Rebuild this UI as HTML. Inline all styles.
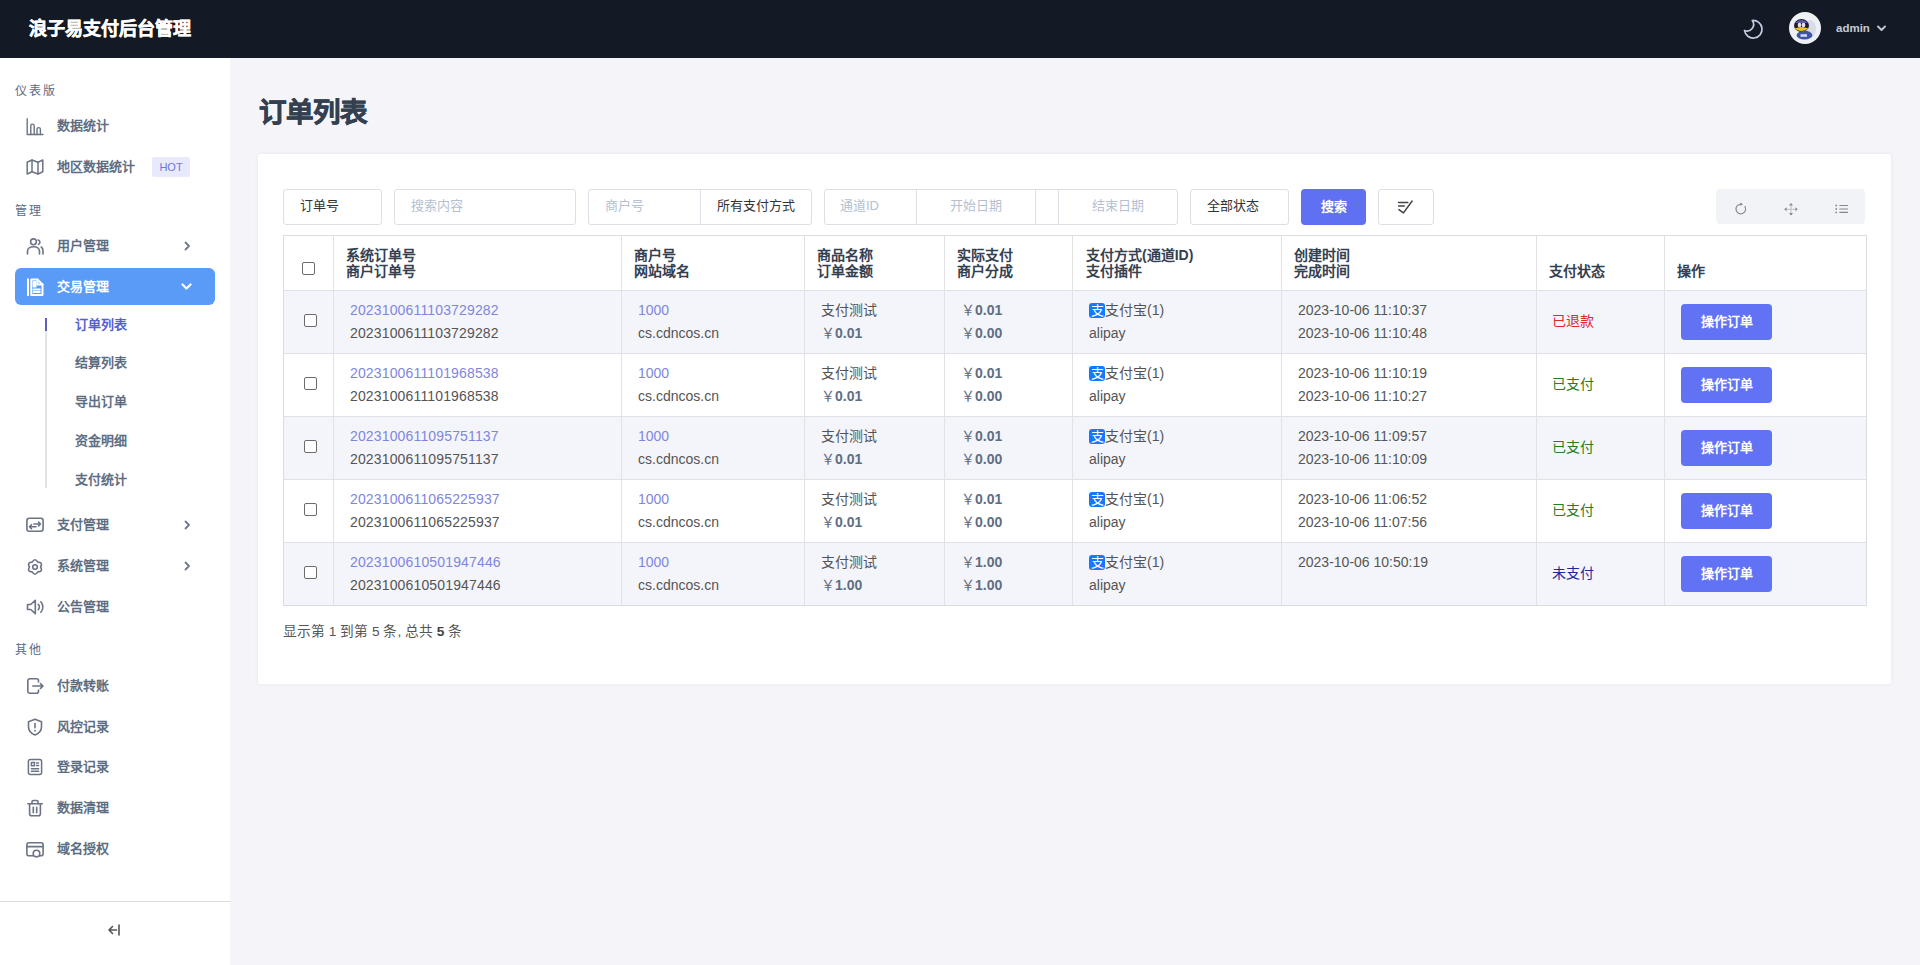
<!DOCTYPE html>
<html lang="zh-CN">
<head>
<meta charset="utf-8">
<style>
*{box-sizing:border-box;margin:0;padding:0}
html,body{width:1920px;height:965px;overflow:hidden}
body{position:relative;background:#f4f4f9;font-family:"Liberation Sans",sans-serif;color:#4d4d4d}
.abs{position:absolute}
.t{position:absolute;white-space:nowrap}
#hdr{left:0;top:0;width:1920px;height:58px;background:#141a25}
#side{left:0;top:58px;width:230px;height:907px;background:#fff}
.sec{font-size:12px;font-weight:400;color:#5a6b84;letter-spacing:2px;line-height:14px}
.mi{left:57px;font-size:13px;font-weight:700;color:#5e6e82;line-height:16px}
.sub{left:75px;font-size:13px;font-weight:700;color:#5e6e82;line-height:16px}
#card{left:258px;top:154px;width:1633px;height:530px;background:#fff;border-radius:3px;box-shadow:0 0 4px rgba(60,70,110,.07)}
.inp{position:absolute;top:189px;height:36px;border:1px solid #dcdfe5;border-radius:3px;background:#fff}
.vl{position:absolute;width:1px;background:#dcdfe5}
.ph{font-size:13px;line-height:17px;color:#b4bfd3;top:197px}
.tx{font-size:13px;line-height:17px;color:#333;top:197px}
.th{font-size:14px;font-weight:700;color:#344050;line-height:15.5px}
.cb{position:absolute;width:13px;height:13px;border:1px solid #6b6b6b;border-radius:2px;background:#fff}
.lk{font-size:14px;line-height:17px;color:#7f86dd;letter-spacing:0.15px}
.d1{font-size:14px;line-height:17px;color:#545454;letter-spacing:0.15px}
.d2{font-size:14px;line-height:17px;color:#545454}
.dt{font-size:14px;line-height:17px;color:#555}
.amt{font-size:14px;line-height:17px;color:#5e6e82;font-weight:700}
.st{font-size:14px;line-height:17px}
.btn{position:absolute;width:91px;height:36px;background:#6272f5;border-radius:4px;color:#fff;font-size:13px;font-weight:700;line-height:36px;text-align:center}
</style>
</head>
<body>
<div id="hdr" class="abs"></div>
<div class="t" style="left:29px;top:16px;font-size:18px;font-weight:700;color:#fff;-webkit-text-stroke:0.5px #fff;line-height:26px">浪子易支付后台管理</div>
<svg class="abs" style="left:1742px;top:18px" width="22" height="22" viewBox="0 0 22 22" fill="none" stroke="#c5cbe0" stroke-width="1.7" stroke-linecap="round" stroke-linejoin="round"><path d="M10.3 2.5A8.8 8.8 0 1 1 2.5 12.5 6.6 6.6 0 0 0 10.3 2.5z"/></svg>
<svg class="abs" style="left:1789px;top:12px" width="32" height="32" viewBox="0 0 32 32"><circle cx="16" cy="16" r="16" fill="#eef0f6"/><ellipse cx="21" cy="17" rx="6" ry="9" fill="#d9dce8"/><ellipse cx="12.5" cy="13.5" rx="7.5" ry="6.5" fill="#1f1d33"/><path d="M6 11 Q12.5 5 19 11z" fill="#5d5aa8"/><ellipse cx="10.5" cy="13" rx="1.8" ry="2.2" fill="#e6dff0"/><ellipse cx="14.5" cy="13" rx="1.8" ry="2.2" fill="#e6dff0"/><path d="M5.5 16.5 Q12.5 13.5 19.5 16.5 Q12.5 21.5 5.5 16.5z" fill="#e8c21a"/><ellipse cx="15.5" cy="23.2" rx="7.8" ry="4.4" fill="#3d55a5"/><path d="M11.5 23.5h6.5" stroke="#cfd9f0" stroke-width="2.6"/></svg>
<div class="t" style="left:1836px;top:21px;font-size:11.5px;font-weight:700;color:#c4cad6;line-height:14px">admin</div>
<svg class="abs" style="left:1877px;top:25px" width="9" height="7" viewBox="0 0 9 7" fill="none" stroke="#c4cad6" stroke-width="1.8" stroke-linecap="round" stroke-linejoin="round"><path d="M1 1.5l3.5 3.5 3.5-3.5"/></svg>
<div id="side" class="abs"></div>
<div class="t sec" style="left:15px;top:84px">仪表版</div>
<svg class="abs" style="left:26px;top:118px" width="18" height="18" viewBox="0 0 18 18" fill="none" stroke="#6b7384" stroke-width="1.4" stroke-linecap="round" stroke-linejoin="round"><path d="M1.2 0.8V16.5H17"/><path d="M4.8 16.5V7.8a1.7 1.7 0 0 1 3.4 0v8.7"/><path d="M11 16.5v-5.2a1.7 1.7 0 0 1 3.4 0v5.2"/></svg>
<div class="t mi" style="top:118px">数据统计</div>
<svg class="abs" style="left:26px;top:158px" width="18" height="18" viewBox="0 0 18 18" fill="none" stroke="#6b7384" stroke-width="1.5" stroke-linecap="round" stroke-linejoin="round"><path d="M1.2 4.2L6 2l6 2.2L16.8 2v11.8L12 16l-6-2.2L1.2 16z"/><path d="M6 2v11.8M12 4.2V16"/></svg>
<div class="t mi" style="top:159px">地区数据统计</div>
<div class="t" style="left:152px;top:157px;width:38px;height:20px;background:#e8e9fc;border-radius:2px;color:#6d78d8;font-size:11px;line-height:20px;text-align:center">HOT</div>
<div class="t sec" style="left:15px;top:204px">管理</div>
<svg class="abs" style="left:26px;top:238px" width="18" height="18" viewBox="0 0 18 18" fill="none" stroke="#6b7384" stroke-width="1.6" stroke-linecap="round" stroke-linejoin="round"><circle cx="7.5" cy="3.8" r="2.9"/><path d="M1.5 16v-2.8c0-2.6 2.7-4.4 6-4.4s6 1.8 6 4.4V16"/><path d="M12.2 2a2.3 2.3 0 0 1 .4 4.3"/><path d="M15.2 9c1.1.7 1.8 2.2 1.8 4V16"/></svg>
<div class="t mi" style="top:238px">用户管理</div>
<svg class="abs" style="left:184px;top:241px" width="7" height="10" viewBox="0 0 7 10" fill="none" stroke="#6c7a8e" stroke-width="1.8" stroke-linecap="round" stroke-linejoin="round"><path d="M1.5 1.5l3.5 3.5-3.5 3.5"/></svg>
<div class="abs" style="left:15px;top:268px;width:200px;height:37px;background:#5a9bf7;border-radius:6px"></div>
<svg class="abs" style="left:26px;top:278px" width="18" height="18" viewBox="0 0 18 18" fill="none" stroke="#fff" stroke-width="2" stroke-linecap="round" stroke-linejoin="round"><path d="M2 1.2v16"/><path d="M5.3 1.5h6.2l5 5v10.5H5.3z"/><path d="M11.5 1.5v5h5"/><path d="M7.6 11.4h6.2M7.6 14h6.2"/><path d="M7.6 4h2v4.5h-2z" fill="#fff"/></svg>
<div class="t mi" style="top:279px;color:#fff">交易管理</div>
<svg class="abs" style="left:181px;top:283px" width="11" height="8" viewBox="0 0 11 8" fill="none" stroke="#fff" stroke-width="2.2" stroke-linecap="round" stroke-linejoin="round"><path d="M1.5 1.5l4 4 4-4"/></svg>
<div class="abs" style="left:45px;top:318px;width:2px;height:170px;background:#e3e4e7"></div>
<div class="abs" style="left:45px;top:318px;width:2px;height:13px;background:#5c60b8"></div>
<div class="t sub" style="top:317px;color:#555fd0">订单列表</div>
<div class="t sub" style="top:355px">结算列表</div>
<div class="t sub" style="top:394px">导出订单</div>
<div class="t sub" style="top:433px">资金明细</div>
<div class="t sub" style="top:472px">支付统计</div>
<svg class="abs" style="left:26px;top:516px" width="18" height="18" viewBox="0 0 18 18" fill="none" stroke="#6b7384" stroke-width="1.6" stroke-linecap="round" stroke-linejoin="round"><rect x="0.9" y="2.3" width="16.2" height="13" rx="2.5"/><path d="M8 8h6.5M12.5 6l2 2-2 2"/><path d="M10 10.7H3.5M5.5 8.7l-2 2 2 2"/></svg>
<div class="t mi" style="top:517px">支付管理</div>
<svg class="abs" style="left:184px;top:520px" width="7" height="10" viewBox="0 0 7 10" fill="none" stroke="#6c7a8e" stroke-width="1.8" stroke-linecap="round" stroke-linejoin="round"><path d="M1.5 1.5l3.5 3.5-3.5 3.5"/></svg>
<svg class="abs" style="left:26px;top:558px" width="18" height="18" viewBox="0 0 18 18" fill="none" stroke="#6b7384" stroke-width="1.6" stroke-linecap="round" stroke-linejoin="round"><path d="M6.20 4.15 Q9.00 -0.60 11.80 4.15 Q17.31 4.20 14.60 9.00 Q17.31 13.80 11.80 13.85 Q9.00 18.60 6.20 13.85 Q0.69 13.80 3.40 9.00 Q0.69 4.20 6.20 4.15z"/><circle cx="9" cy="9" r="2.3"/></svg>
<div class="t mi" style="top:558px">系统管理</div>
<svg class="abs" style="left:184px;top:561px" width="7" height="10" viewBox="0 0 7 10" fill="none" stroke="#6c7a8e" stroke-width="1.8" stroke-linecap="round" stroke-linejoin="round"><path d="M1.5 1.5l3.5 3.5-3.5 3.5"/></svg>
<svg class="abs" style="left:26px;top:598px" width="18" height="18" viewBox="0 0 18 18" fill="none" stroke="#6b7384" stroke-width="1.6" stroke-linecap="round" stroke-linejoin="round"><path d="M1.5 6.5h3.2L9.3 2.3v13.4L4.7 11.5H1.5z"/><path d="M12.2 6.3a4 4 0 0 1 0 5.4"/><path d="M14.8 3.8a7.5 7.5 0 0 1 0 10.4"/></svg>
<div class="t mi" style="top:599px">公告管理</div>
<div class="t sec" style="left:15px;top:643px">其他</div>
<svg class="abs" style="left:26px;top:677px" width="18" height="18" viewBox="0 0 18 18" fill="none" stroke="#6b7384" stroke-width="1.6" stroke-linecap="round" stroke-linejoin="round"><path d="M12.5 5V3.8a2 2 0 0 0-2-2H3.8a2 2 0 0 0-2 2v10.4a2 2 0 0 0 2 2h6.7a2 2 0 0 0 2-2V13"/><path d="M6.8 9h10M14.5 6.6L17 9l-2.5 2.4"/></svg>
<div class="t mi" style="top:678px">付款转账</div>
<svg class="abs" style="left:26px;top:718px" width="18" height="18" viewBox="0 0 18 18" fill="none" stroke="#6b7384" stroke-width="1.6" stroke-linecap="round" stroke-linejoin="round"><path d="M9 1.2l6.5 2.5v5c0 4-2.8 6.8-6.5 8.3-3.7-1.5-6.5-4.3-6.5-8.3v-5z"/><path d="M9 5.5v4.3"/><path d="M9 12.6v.4"/></svg>
<div class="t mi" style="top:719px">风控记录</div>
<svg class="abs" style="left:26px;top:758px" width="18" height="18" viewBox="0 0 18 18" fill="none" stroke="#6b7384" stroke-width="1.5" stroke-linecap="round" stroke-linejoin="round"><rect x="2.4" y="1.5" width="13.2" height="15" rx="2"/><rect x="5.4" y="4.6" width="3" height="3.2"/><path d="M10.5 5h2M10.5 7.5h2M5.4 10.8h7.2M5.4 13.3h7.2"/></svg>
<div class="t mi" style="top:759px">登录记录</div>
<svg class="abs" style="left:26px;top:799px" width="18" height="18" viewBox="0 0 18 18" fill="none" stroke="#6b7384" stroke-width="1.6" stroke-linecap="round" stroke-linejoin="round"><path d="M1.8 4.8h14.4"/><path d="M6 4.8V2.8a1.3 1.3 0 0 1 1.3-1.3h3.4A1.3 1.3 0 0 1 12 2.8v2"/><path d="M3.6 4.8v10a2 2 0 0 0 2 2h6.8a2 2 0 0 0 2-2v-10"/><path d="M7.3 8.2v5.5M10.7 8.2v5.5"/></svg>
<div class="t mi" style="top:800px">数据清理</div>
<svg class="abs" style="left:26px;top:841px" width="18" height="18" viewBox="0 0 18 18" fill="none" stroke="#6b7384" stroke-width="1.6" stroke-linecap="round" stroke-linejoin="round"><rect x="0.9" y="1.8" width="16.2" height="13" rx="2"/><path d="M0.9 5.6h16.2"/><circle cx="10.5" cy="12.6" r="3.3" fill="#fff"/></svg>
<div class="t mi" style="top:841px">域名授权</div>
<div class="abs" style="left:0;top:901px;width:231px;height:1px;background:#d8dade"></div>
<svg class="abs" style="left:108px;top:924px" width="13" height="12" viewBox="0 0 13 12" fill="none" stroke="#555" stroke-width="1.6" stroke-linecap="round" stroke-linejoin="round"><path d="M1.5 6h7M4.5 2.5L1 6l3.5 3.5"/><path d="M11 1v10"/></svg>
<div class="t" style="left:259px;top:95px;font-size:27.5px;font-weight:700;-webkit-text-stroke:0.7px #344050;color:#344050;line-height:36px">订单列表</div>
<div id="card" class="abs"></div>
<div class="inp" style="left:283px;width:99px"></div>
<div class="t tx" style="left:300px">订单号</div>
<div class="inp" style="left:394px;width:182px"></div>
<div class="t ph" style="left:411px">搜索内容</div>
<div class="inp" style="left:588px;width:224px"></div>
<div class="vl" style="left:700px;top:190px;height:34px"></div>
<div class="t ph" style="left:605px">商户号</div>
<div class="t tx" style="left:717px">所有支付方式</div>
<div class="inp" style="left:824px;width:354px"></div>
<div class="vl" style="left:916px;top:190px;height:34px"></div>
<div class="vl" style="left:1035px;top:190px;height:34px"></div>
<div class="vl" style="left:1058px;top:190px;height:34px"></div>
<div class="t ph" style="left:840px">通道ID</div>
<div class="t ph" style="left:950px">开始日期</div>
<div class="t ph" style="left:1092px">结束日期</div>
<div class="inp" style="left:1190px;width:99px"></div>
<div class="t tx" style="left:1207px">全部状态</div>
<div class="abs" style="left:1301px;top:189px;width:65px;height:36px;background:#6070f2;border-radius:4px;color:#fff;font-size:13px;font-weight:700;line-height:36px;text-align:center">搜索</div>
<div class="inp" style="left:1378px;width:56px"></div>
<svg class="abs" style="left:1396px;top:198px" width="18" height="17" viewBox="0 0 18 17" fill="none" stroke="#444" stroke-width="1.5" stroke-linecap="round" stroke-linejoin="round"><path d="M2.6 4.4h9.2M2.6 7.9h5.7"/><path d="M2.9 11.6L7.5 14.9 16.1 3"/></svg>
<div class="abs" style="left:1716px;top:189px;width:149px;height:35px;background:#f1f3f6;border-radius:4px"></div>
<svg class="abs" style="left:1734px;top:202px" width="14" height="14" viewBox="0 0 14 14" fill="none" stroke="#888" stroke-width="1.15" stroke-linecap="round" stroke-linejoin="round"><path d="M11 4.6A4.8 4.8 0 1 1 6.8 2.2"/><path d="M6.3 0.4L9 2.2 6.3 4z" fill="#888" stroke="none"/></svg>
<svg class="abs" style="left:1783px;top:202px" width="16" height="15" viewBox="0 0 16 15" fill="none" stroke="#bbb" stroke-width="1" stroke-linecap="round" stroke-linejoin="round"><path d="M2.5 7.3h11M8 2v10.6" stroke-width="0.9"/><path d="M1.2 7.3l2.4-2v4zM14.8 7.3l-2.4-2v4zM8 1.1l-2 2.4h4zM8 13.5l-2-2.4h4z" fill="#888" stroke="none"/></svg>
<svg class="abs" style="left:1834px;top:203px" width="15" height="12" viewBox="0 0 15 12" fill="none" stroke="#888" stroke-width="1.15" stroke-linecap="round" stroke-linejoin="round"><path d="M5.8 2.5h7.7M5.8 6h7.7M5.8 9.4h7.7"/><circle cx="2.2" cy="2.5" r="0.9" fill="#888" stroke="none"/><circle cx="2.2" cy="6" r="0.9" fill="#888" stroke="none"/><circle cx="2.2" cy="9.4" r="0.9" fill="#888" stroke="none"/></svg>
<div class="abs" style="left:283px;top:291px;width:1583px;height:62px;background:#f4f5fa"></div>
<div class="abs" style="left:283px;top:416px;width:1583px;height:63px;background:#f4f5fa"></div>
<div class="abs" style="left:283px;top:542px;width:1583px;height:63px;background:#f4f5fa"></div>
<div class="abs" style="left:283px;top:235px;width:1584px;height:371px;border:1px solid #d9dce1"></div>
<div class="abs" style="left:283px;top:290px;width:1583px;height:1px;background:#dde0e6"></div>
<div class="abs" style="left:283px;top:353px;width:1583px;height:1px;background:#dfe1e5"></div>
<div class="abs" style="left:283px;top:416px;width:1583px;height:1px;background:#dfe1e5"></div>
<div class="abs" style="left:283px;top:479px;width:1583px;height:1px;background:#dfe1e5"></div>
<div class="abs" style="left:283px;top:542px;width:1583px;height:1px;background:#dfe1e5"></div>
<div class="abs" style="left:333px;top:235px;width:1px;height:370px;background:#e0e2e6"></div>
<div class="abs" style="left:621px;top:235px;width:1px;height:370px;background:#e0e2e6"></div>
<div class="abs" style="left:804px;top:235px;width:1px;height:370px;background:#e0e2e6"></div>
<div class="abs" style="left:944px;top:235px;width:1px;height:370px;background:#e0e2e6"></div>
<div class="abs" style="left:1072px;top:235px;width:1px;height:370px;background:#e0e2e6"></div>
<div class="abs" style="left:1281px;top:235px;width:1px;height:370px;background:#e0e2e6"></div>
<div class="abs" style="left:1536px;top:235px;width:1px;height:370px;background:#e0e2e6"></div>
<div class="abs" style="left:1664px;top:235px;width:1px;height:370px;background:#e0e2e6"></div>
<div class="cb" style="left:302px;top:262px"></div>
<div class="t th" style="left:346px;top:248px">系统订单号<br>商户订单号</div>
<div class="t th" style="left:634px;top:248px">商户号<br>网站域名</div>
<div class="t th" style="left:817px;top:248px">商品名称<br>订单金额</div>
<div class="t th" style="left:957px;top:248px">实际支付<br>商户分成</div>
<div class="t th" style="left:1086px;top:248px">支付方式(通道ID)<br>支付插件</div>
<div class="t th" style="left:1294px;top:248px">创建时间<br>完成时间</div>
<div class="t th" style="left:1549px;top:248px"><br>支付状态</div>
<div class="t th" style="left:1677px;top:248px"><br>操作</div>
<div class="cb" style="left:304px;top:314px"></div>
<div class="t lk" style="left:350px;top:302px">2023100611103729282</div>
<div class="t d1" style="left:350px;top:325px">2023100611103729282</div>
<div class="t lk" style="left:638px;top:302px;letter-spacing:0">1000</div>
<div class="t d2" style="left:638px;top:325px">cs.cdncos.cn</div>
<div class="t d2" style="left:821px;top:302px">支付测试</div>
<div class="t amt" style="left:821px;top:325px"><span style="font-weight:400">￥</span>0.01</div>
<div class="t amt" style="left:961px;top:302px"><span style="font-weight:400">￥</span>0.01</div>
<div class="t amt" style="left:961px;top:325px"><span style="font-weight:400">￥</span>0.00</div>
<div class="abs" style="left:1089px;top:303px;width:16px;height:15px;background:#1677ff;border-radius:3px;color:#fff;font-size:13px;line-height:15px;text-align:center">支</div>
<div class="t d2" style="left:1105px;top:302px">支付宝(1)</div>
<div class="t d2" style="left:1089px;top:325px">alipay</div>
<div class="t dt" style="left:1298px;top:302px">2023-10-06 11:10:37</div>
<div class="t dt" style="left:1298px;top:325px">2023-10-06 11:10:48</div>
<div class="t st" style="left:1552px;top:313px;color:#d92b2b">已退款</div>
<div class="btn" style="left:1681px;top:304px">操作订单</div>
<div class="cb" style="left:304px;top:377px"></div>
<div class="t lk" style="left:350px;top:365px">2023100611101968538</div>
<div class="t d1" style="left:350px;top:388px">2023100611101968538</div>
<div class="t lk" style="left:638px;top:365px;letter-spacing:0">1000</div>
<div class="t d2" style="left:638px;top:388px">cs.cdncos.cn</div>
<div class="t d2" style="left:821px;top:365px">支付测试</div>
<div class="t amt" style="left:821px;top:388px"><span style="font-weight:400">￥</span>0.01</div>
<div class="t amt" style="left:961px;top:365px"><span style="font-weight:400">￥</span>0.01</div>
<div class="t amt" style="left:961px;top:388px"><span style="font-weight:400">￥</span>0.00</div>
<div class="abs" style="left:1089px;top:366px;width:16px;height:15px;background:#1677ff;border-radius:3px;color:#fff;font-size:13px;line-height:15px;text-align:center">支</div>
<div class="t d2" style="left:1105px;top:365px">支付宝(1)</div>
<div class="t d2" style="left:1089px;top:388px">alipay</div>
<div class="t dt" style="left:1298px;top:365px">2023-10-06 11:10:19</div>
<div class="t dt" style="left:1298px;top:388px">2023-10-06 11:10:27</div>
<div class="t st" style="left:1552px;top:376px;color:#2a7d24">已支付</div>
<div class="btn" style="left:1681px;top:367px">操作订单</div>
<div class="cb" style="left:304px;top:440px"></div>
<div class="t lk" style="left:350px;top:428px">2023100611095751137</div>
<div class="t d1" style="left:350px;top:451px">2023100611095751137</div>
<div class="t lk" style="left:638px;top:428px;letter-spacing:0">1000</div>
<div class="t d2" style="left:638px;top:451px">cs.cdncos.cn</div>
<div class="t d2" style="left:821px;top:428px">支付测试</div>
<div class="t amt" style="left:821px;top:451px"><span style="font-weight:400">￥</span>0.01</div>
<div class="t amt" style="left:961px;top:428px"><span style="font-weight:400">￥</span>0.01</div>
<div class="t amt" style="left:961px;top:451px"><span style="font-weight:400">￥</span>0.00</div>
<div class="abs" style="left:1089px;top:429px;width:16px;height:15px;background:#1677ff;border-radius:3px;color:#fff;font-size:13px;line-height:15px;text-align:center">支</div>
<div class="t d2" style="left:1105px;top:428px">支付宝(1)</div>
<div class="t d2" style="left:1089px;top:451px">alipay</div>
<div class="t dt" style="left:1298px;top:428px">2023-10-06 11:09:57</div>
<div class="t dt" style="left:1298px;top:451px">2023-10-06 11:10:09</div>
<div class="t st" style="left:1552px;top:439px;color:#2a7d24">已支付</div>
<div class="btn" style="left:1681px;top:430px">操作订单</div>
<div class="cb" style="left:304px;top:503px"></div>
<div class="t lk" style="left:350px;top:491px">2023100611065225937</div>
<div class="t d1" style="left:350px;top:514px">2023100611065225937</div>
<div class="t lk" style="left:638px;top:491px;letter-spacing:0">1000</div>
<div class="t d2" style="left:638px;top:514px">cs.cdncos.cn</div>
<div class="t d2" style="left:821px;top:491px">支付测试</div>
<div class="t amt" style="left:821px;top:514px"><span style="font-weight:400">￥</span>0.01</div>
<div class="t amt" style="left:961px;top:491px"><span style="font-weight:400">￥</span>0.01</div>
<div class="t amt" style="left:961px;top:514px"><span style="font-weight:400">￥</span>0.00</div>
<div class="abs" style="left:1089px;top:492px;width:16px;height:15px;background:#1677ff;border-radius:3px;color:#fff;font-size:13px;line-height:15px;text-align:center">支</div>
<div class="t d2" style="left:1105px;top:491px">支付宝(1)</div>
<div class="t d2" style="left:1089px;top:514px">alipay</div>
<div class="t dt" style="left:1298px;top:491px">2023-10-06 11:06:52</div>
<div class="t dt" style="left:1298px;top:514px">2023-10-06 11:07:56</div>
<div class="t st" style="left:1552px;top:502px;color:#2a7d24">已支付</div>
<div class="btn" style="left:1681px;top:493px">操作订单</div>
<div class="cb" style="left:304px;top:566px"></div>
<div class="t lk" style="left:350px;top:554px">2023100610501947446</div>
<div class="t d1" style="left:350px;top:577px">2023100610501947446</div>
<div class="t lk" style="left:638px;top:554px;letter-spacing:0">1000</div>
<div class="t d2" style="left:638px;top:577px">cs.cdncos.cn</div>
<div class="t d2" style="left:821px;top:554px">支付测试</div>
<div class="t amt" style="left:821px;top:577px"><span style="font-weight:400">￥</span>1.00</div>
<div class="t amt" style="left:961px;top:554px"><span style="font-weight:400">￥</span>1.00</div>
<div class="t amt" style="left:961px;top:577px"><span style="font-weight:400">￥</span>1.00</div>
<div class="abs" style="left:1089px;top:555px;width:16px;height:15px;background:#1677ff;border-radius:3px;color:#fff;font-size:13px;line-height:15px;text-align:center">支</div>
<div class="t d2" style="left:1105px;top:554px">支付宝(1)</div>
<div class="t d2" style="left:1089px;top:577px">alipay</div>
<div class="t dt" style="left:1298px;top:554px">2023-10-06 10:50:19</div>
<div class="t st" style="left:1552px;top:565px;color:#1f27a0">未支付</div>
<div class="btn" style="left:1681px;top:556px">操作订单</div>
<div class="t" style="left:283px;top:623px;font-size:13.7px;line-height:17px;color:#555">显示第 1 到第 5 条, 总共 <b style="color:#444">5</b> 条</div>
</body>
</html>
